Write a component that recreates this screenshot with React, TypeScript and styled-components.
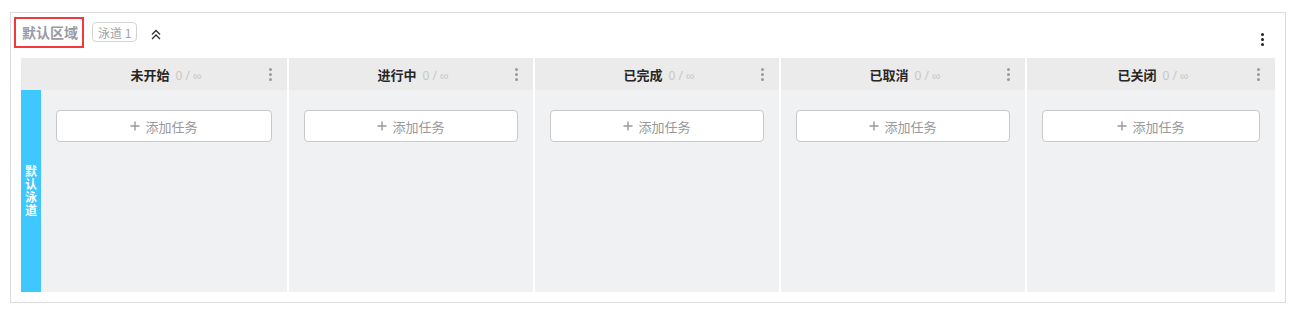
import * as React from 'react'
import styled, { createGlobalStyle } from 'styled-components'

const GlobalStyle = createGlobalStyle`
  html, body {
    margin: 0;
    background: #fff;
    font-family: "Noto Sans CJK SC", "Noto Sans", sans-serif;
  }
  body {
    padding: 12px 10px 0;
  }
`

const Panel = styled.section`
  box-sizing: border-box;
  height: 291px;
  border: 1px solid #dcdcdc;
  display: flex;
  flex-direction: column;
`

const PanelHeader = styled.div`
  height: 38px;
  display: flex;
  align-items: center;
  padding-left: 3px;
`

const AreaTitle = styled.div`
  box-sizing: border-box;
  height: 31px;
  display: flex;
  align-items: center;
  padding: 0 4px 0 6px;
  border: 2px solid #f2383a;
  color: #9a9aa2;
  font-size: 14px;
  font-weight: 700;
`

const LaneTag = styled.span`
  box-sizing: border-box;
  height: 20px;
  margin-left: 8px;
  padding: 0 5px;
  display: inline-flex;
  align-items: center;
  border: 1px solid #d4d4d4;
  border-radius: 4px;
  color: #a0a0a0;
  font-size: 12px;
`

const CollapseButton = styled.button`
  margin: 6px 0 0 14px;
  padding: 0;
  border: 0;
  background: none;
  display: flex;
  cursor: pointer;
`

const Kebab = styled.button<{ $color: string }>`
  width: 20px;
  padding: 0;
  border: 0;
  background: none;
  display: flex;
  flex-direction: column;
  align-items: center;
  gap: 2px;
  cursor: pointer;

  & > i {
    width: 3px;
    height: 3px;
    border-radius: 50%;
    background: ${(p) => p.$color};
  }
`

const PanelKebab = styled(Kebab)`
  margin: 14px 13px 0 auto;
`

// last column is a little wider, as in the original board
const Board = styled.div`
  flex: 1;
  margin: 7px 10px 10px;
  display: grid;
  grid-template-columns: 20px 246px 246px 246px 246px 1fr;
  grid-template-rows: 32px 1fr;
`

const Corner = styled.div`
  background: #ebebeb;
`

const ColumnHead = styled.div<{ $divided?: boolean }>`
  display: grid;
  grid-template-columns: 1fr auto 1fr;
  align-items: center;
  background: #ebebeb;
  border-left: ${(p) => (p.$divided ? '2px solid #fff' : '0')};
`

const HeadTitle = styled.div`
  grid-column: 2;
  display: flex;
  align-items: baseline;
  margin-left: 4px;
`

const StatusName = styled.span`
  color: #262626;
  font-size: 13px;
  font-weight: 700;
`

const Count = styled.span`
  margin-left: 6px;
  color: #c8c8c8;
  font-family: "Noto Sans", sans-serif;
  font-size: 12px;
`

const HeadKebab = styled(Kebab)`
  grid-column: 3;
  justify-self: end;
  margin-right: 7px;
`

const LaneLabel = styled.div`
  background: #3ec8ff;
  display: flex;
  align-items: center;
  justify-content: center;
  color: #fff;
  font-size: 12px;
  font-weight: 700;
  writing-mode: vertical-rl;
  text-orientation: upright;
  letter-spacing: 1px;
`

const ColumnBody = styled.div<{ $divided?: boolean }>`
  background: #f0f1f3;
  padding: 20px 15px;
  border-left: ${(p) => (p.$divided ? '2px solid #fff' : '0')};
`

const AddTaskButton = styled.button`
  box-sizing: border-box;
  width: 100%;
  height: 32px;
  display: flex;
  align-items: center;
  justify-content: center;
  gap: 5px;
  background: #fff;
  border: 1px solid #c9c9c9;
  border-radius: 4px;
  color: #999;
  font-family: inherit;
  font-size: 13px;
  cursor: pointer;
`

const statuses = ['未开始', '进行中', '已完成', '已取消', '已关闭']

function Dots({ color, as: Comp = Kebab }: { color: string; as?: typeof Kebab }) {
  return (
    <Comp $color={color}>
      <i />
      <i />
      <i />
    </Comp>
  )
}

export default function App() {
  return (
    <>
      <GlobalStyle />
      <Panel>
        <PanelHeader>
          <AreaTitle>默认区域</AreaTitle>
          <LaneTag>泳道 1</LaneTag>
          <CollapseButton>
            <svg width="10" height="12" viewBox="0 0 10 12" fill="none">
              <path
                d="M1 5.5 L5 1.5 L9 5.5 M1 10 L5 6 L9 10"
                stroke="#333"
                strokeWidth="1.4"
              />
            </svg>
          </CollapseButton>
          <Dots color="#222" as={PanelKebab} />
        </PanelHeader>
        <Board>
          <Corner />
          {statuses.map((s, i) => (
            <ColumnHead key={s} $divided={i > 0}>
              <HeadTitle>
                <StatusName>{s}</StatusName>
                <Count>0 / ∞</Count>
              </HeadTitle>
              <Dots color="#9a9a9a" as={HeadKebab} />
            </ColumnHead>
          ))}
          <LaneLabel>默认泳道</LaneLabel>
          {statuses.map((s, i) => (
            <ColumnBody key={s} $divided={i > 0}>
              <AddTaskButton>
                <svg width="10" height="10" viewBox="0 0 10 10">
                  <path d="M5 0.5 V9.5 M0.5 5 H9.5" stroke="#999" strokeWidth="1.4" />
                </svg>
                添加任务
              </AddTaskButton>
            </ColumnBody>
          ))}
        </Board>
      </Panel>
    </>
  )
}
